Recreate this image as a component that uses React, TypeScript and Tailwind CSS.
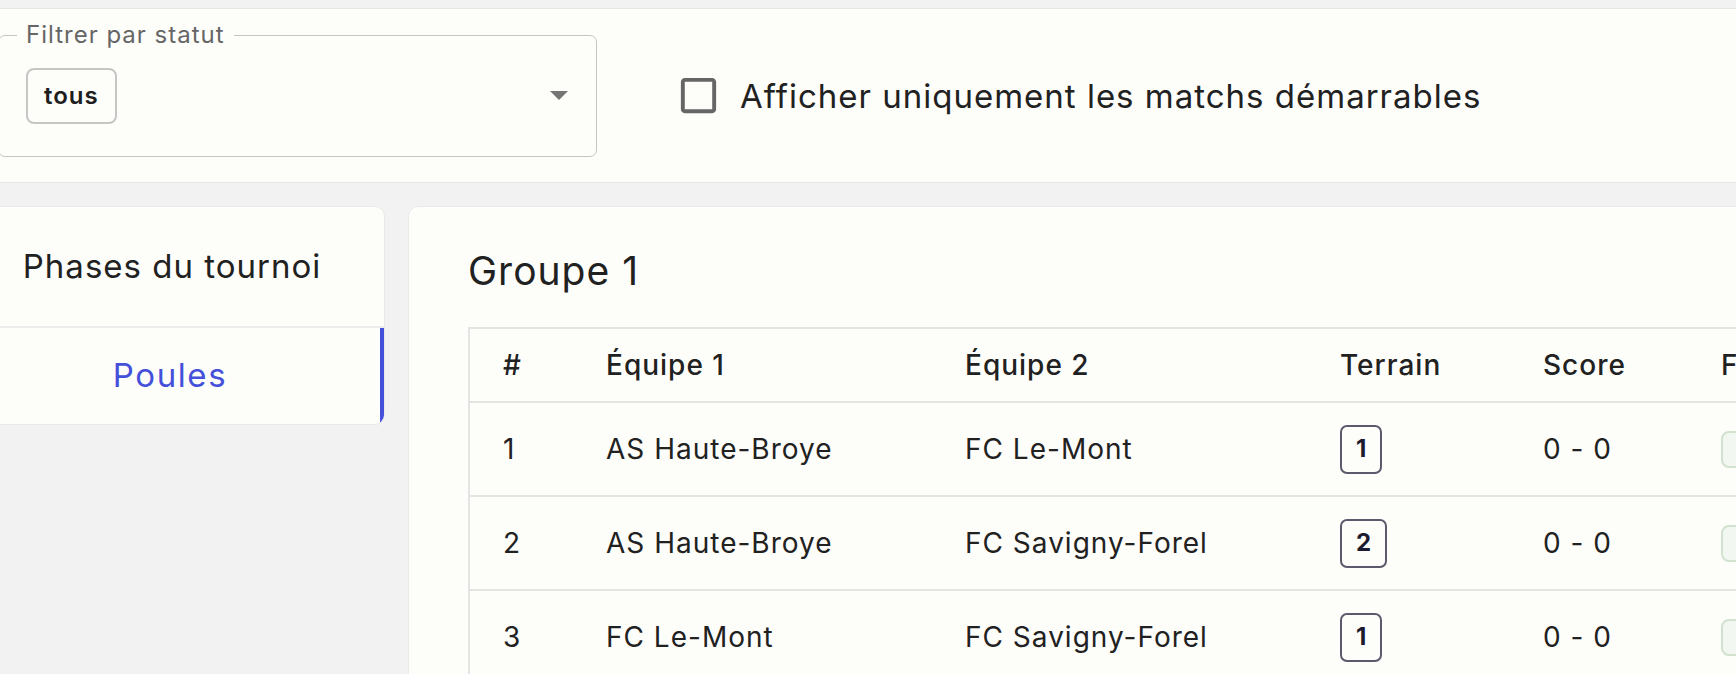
import { Fragment } from "react";

type Match = { id: number; home: string; away: string; field: number; score: string };

const matches: Match[] = [
  { id: 1, home: "AS Haute-Broye", away: "FC Le-Mont", field: 1, score: "0 - 0" },
  { id: 2, home: "AS Haute-Broye", away: "FC Savigny-Forel", field: 2, score: "0 - 0" },
  { id: 3, home: "FC Le-Mont", away: "FC Savigny-Forel", field: 1, score: "0 - 0" },
];

const columns = ["#", "Équipe 1", "Équipe 2", "Terrain", "Score", "Forfait"];

function CheckboxIcon() {
  return (
    <svg viewBox="0 0 24 24" className="h-[47px] w-[47px] shrink-0" fill="#666666">
      <path d="M19 5v14H5V5h14m0-2H5c-1.11 0-2 .9-2 2v14c0 1.1.89 2 2 2h14c1.1 0 2-.9 2-2V5c0-1.1-.9-2-2-2z" />
    </svg>
  );
}

function StatusFilter() {
  return (
    <div className="relative flex h-[122px] w-[599px] shrink-0 items-center justify-between rounded-[7px] border border-[#c4c4c2] pl-[27px] pr-[28px]">
      <span className="absolute -top-[16px] left-[18px] bg-[#fdfdfa] px-[9px] text-[24px] leading-[30px] tracking-[1px] text-[#666666]">
        Filtrer par statut
      </span>
      <span className="flex h-[56px] items-center rounded-[8px] border-2 border-[#c6c6c6] px-[16px] text-[24px] font-semibold tracking-[1px] text-[#1e1e1e]">
        tous
      </span>
      <svg viewBox="0 0 10 5" className="h-[9px] w-[18px]" fill="#757575">
        <path d="M0 0l5 5 5-5z" />
      </svg>
    </div>
  );
}

export default function App() {
  return (
    <div className="h-[674px] w-[1736px] overflow-hidden bg-[#f2f2f3] font-['Inter',sans-serif] text-[#212121]">
      <div className="-ml-[41px] w-[2100px] pt-[8px]">
        <div className="flex h-[175px] items-center border-y border-[#e6e6e6] bg-[#fdfdfa] px-[39px]">
          <StatusFilter />
          <label className="ml-[78px] flex items-center gap-[18px]">
            <CheckboxIcon />
            <span className="text-[33px] leading-[40px] tracking-[1px]">Afficher uniquement les matchs démarrables</span>
          </label>
        </div>

        <div className="mt-[23px] flex items-start gap-[23px]">
          <aside className="w-[426px] shrink-0 overflow-hidden rounded-r-[10px] border border-[#e9e9e9] bg-[#fdfdfa]">
            <div className="flex h-[121px] items-center justify-center border-b-2 border-[#ececec] text-[33px] tracking-[1px]">
              Phases du tournoi
            </div>
            <div className="flex h-[96px] items-center justify-center border-r-4 border-[#4450da] text-[33px] tracking-[1.6px] text-[#4450da]">
              Poules
            </div>
          </aside>

          <main className="h-[600px] flex-1 rounded-tl-[10px] border border-[#e9e9e9] bg-[#fdfdfa] pl-[59px] pt-[40px]">
            <h2 className="h-[48px] text-[39px] leading-[48px] tracking-[1px]">Groupe 1</h2>
            <table className="mt-[32px] w-[1500px] table-fixed border-collapse border-l-2 border-t-2 border-[#e4e4e4] text-left text-[28px] tracking-[1px]">
              <colgroup>
                <col className="w-[104px]" />
                <col className="w-[359px]" />
                <col className="w-[375px]" />
                <col className="w-[203px]" />
                <col className="w-[178px]" />
                <col />
              </colgroup>
              <thead>
                <tr className="h-[74px] border-b-2 border-[#e4e4e4]">
                  {columns.map((c) => (
                    <th key={c} className="pl-[33px] font-medium">
                      {c}
                    </th>
                  ))}
                </tr>
              </thead>
              <tbody>
                {matches.map((m) => (
                  <Fragment key={m.id}>
                    <tr className="h-[94px] border-b-2 border-[#e4e4e4]">
                      <td className="pl-[33px]">{m.id}</td>
                      <td className="pl-[33px]">{m.home}</td>
                      <td className="pl-[33px]">{m.away}</td>
                      <td className="pl-[33px]">
                        <span className="inline-flex h-[49px] items-center rounded-[7px] border-2 border-[#5b5a6c] px-[14px] text-[24px] font-bold tracking-normal text-[#1c1a2e]">
                          {m.field}
                        </span>
                      </td>
                      <td className="pl-[33px]">{m.score}</td>
                      <td className="pl-[33px]">
                        <span className="block h-[37px] w-[160px] rounded-[8px] border-2 border-[#d2e2cf] bg-[#f3f7f1]" />
                      </td>
                    </tr>
                  </Fragment>
                ))}
              </tbody>
            </table>
          </main>
        </div>
      </div>
    </div>
  );
}
